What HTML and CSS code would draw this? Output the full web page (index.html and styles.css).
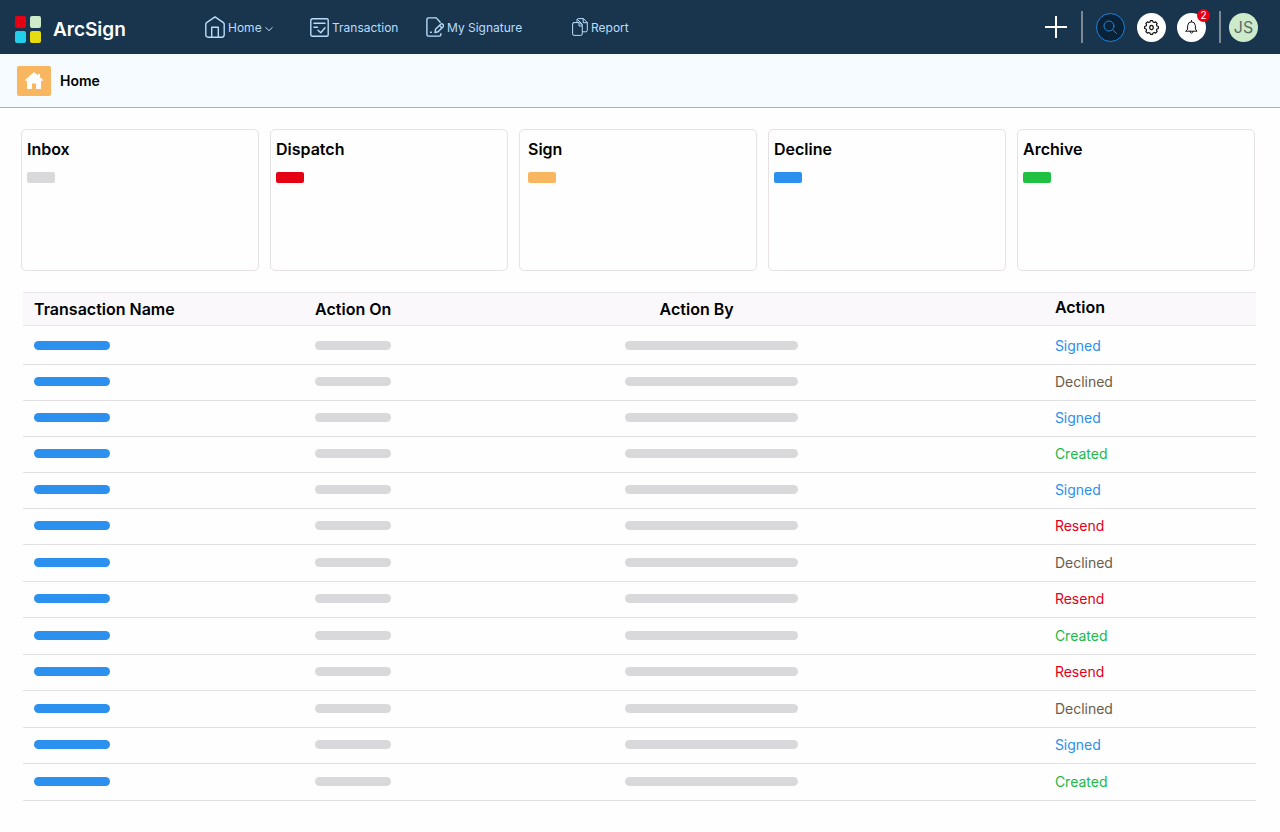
FILE: index.html
```html
<!DOCTYPE html>
<html lang="en">
<head>
<meta charset="utf-8">
<meta name="viewport" content="width=device-width, initial-scale=1">
<title>ArcSign</title>
<link rel="stylesheet" href="styles.css">
</head>
<body>
<header class="topbar">
  <a class="brand" href="#">
    <span class="logo"><i class="red"></i><i class="mint"></i><i class="cyan"></i><i class="yellow"></i></span>
    <span>ArcSign</span>
  </a>
  <nav class="nav">
    <a class="nav-home" href="#">
      <svg width="20" height="22" viewBox="0 0 20 22"><path d="M.8 8.2Q.8 7.2 1.6 6.6L10 .9l8.4 5.7q.8.6.8 1.6v10.6q0 2.4-2.4 2.4H3.200q-2.400 0-2.400-2.400zM6.700 21v-9.700h6.600V21"/></svg>
      <span>Home</span>
      <svg class="chevron" width="8" height="6" viewBox="0 0 8 6"><path d="M.7 1.500L4 4.700l3.300-3.200"/></svg>
    </a>
    <a class="nav-transaction" href="#">
      <svg width="19" height="19" viewBox="0 0 19 19"><rect x=".8" y=".8" width="17.400" height="17.400" rx="1.500"/><path d="M4 5.200h11M4 9.200h3.500M8 12.200l2.800 2.600L15 9.700"/></svg>
      <span>Transaction</span>
    </a>
    <a class="nav-signature" href="#">
      <svg width="18" height="20" viewBox="0 0 18 20"><path d="M14.200 5.200L10.300.9H2.500Q.9.900.9 2.500v15q0 1.600 1.600 1.600h10.800q1.600 0 1.600-1.600v-.8M4.600 15.200h.8M9 15.500l.5-3.200 5.200-5q1.300-1 2.300.2 1 1.200 0 2.400l-5 4.800zM13.500 8.500l2.500 2.500"/></svg>
      <span>My Signature</span>
    </a>
    <a class="nav-report" href="#">
      <svg class="thin" width="16" height="18" viewBox="0 0 16 18"><path d="M1.800 4.600h5.500l3 3v8.300q0 1.500-1.500 1.500H2.100q-1.500 0-1.500-1.500V6q0-1.400 1.200-1.400zM7 4.800V8h3.200M5 4.400V2Q5 .6 6.400.6h5l3.900 3.900v7.900q0 1.400-1.400 1.400h-3.500M11.200.8v3.900h3.900M5.500 1.500l5 5"/></svg>
      <span>Report</span>
    </a>
  </nav>
  <div class="tools">
    <button class="add" aria-label="Add"><svg width="22" height="22" viewBox="0 0 22 22"><path d="M11 0v22M0 11h22"/></svg></button>
    <span class="divider"></span>
    <button class="round search" aria-label="Search"><svg width="15" height="15" viewBox="0 0 15 15"><circle cx="6" cy="6" r="5"/><path d="M9.600 9.600l4 4"/></svg></button>
    <button class="round settings" aria-label="Settings"><svg width="15" height="15" viewBox="0 0 24 24"><path d="M9.500 3.300L10.300 1h3.400l.8 2.300 1.900.8 2.200-1.100 2.400 2.400-1.100 2.200.8 1.900 2.300.8v3.400l-2.300.8-.8 1.900 1.100 2.200-2.400 2.400-2.200-1.100-1.900.8-.8 2.300h-3.400l-.8-2.300-1.900-.8L5.400 21 3 18.600l1.100-2.200-.8-1.900L1 13.700v-3.400l2.300-.8.8-1.900L3 5.400 5.400 3l2.200 1.100z"/><ellipse cx="12" cy="12" rx="2.800" ry="3.400"/></svg></button>
    <button class="round bell" aria-label="Notifications"><svg width="13" height="15" viewBox="0 0 13 15"><path d="M6.500.5v1.300M1 11.200h11L10.400 9V5.800Q10.100 2 6.500 1.800 2.900 2 2.600 5.800V9zM5 11.400q.2 1.700 1.500 1.700T8 11.400"/></svg><span class="badge">2</span></button>
    <span class="divider"></span>
    <button class="round avatar">JS</button>
  </div>
</header>
<div class="crumb">
  <span class="crumb-icon"><svg width="18" height="17" viewBox="0 0 18 17"><path d="M9 0L0 8l1 1.300 1-.8V17h5v-5.500h4V17h5V8.500l1 .8L18 8l-3-2.700V2h-2v1.500z"/></svg></span>
  <h1>Home</h1>
</div>
<main>
  <section class="cards">
    <article class="card"><h2>Inbox</h2><span class="chip grey"></span></article>
    <article class="card"><h2>Dispatch</h2><span class="chip red"></span></article>
    <article class="card roomy"><h2>Sign</h2><span class="chip orange"></span></article>
    <article class="card"><h2>Decline</h2><span class="chip blue"></span></article>
    <article class="card"><h2>Archive</h2><span class="chip green"></span></article>
  </section>
  <table>
    <thead><tr><th class="c-name">Transaction Name</th><th class="c-on">Action On</th><th class="c-by">Action By</th><th class="c-action">Action</th></tr></thead>
    <tbody>
      <tr><td><span class="bar blue"></span></td><td><span class="bar"></span></td><td><span class="bar long"></span></td><td class="signed">Signed</td></tr>
      <tr><td><span class="bar blue"></span></td><td><span class="bar"></span></td><td><span class="bar long"></span></td><td class="declined">Declined</td></tr>
      <tr><td><span class="bar blue"></span></td><td><span class="bar"></span></td><td><span class="bar long"></span></td><td class="signed">Signed</td></tr>
      <tr><td><span class="bar blue"></span></td><td><span class="bar"></span></td><td><span class="bar long"></span></td><td class="created">Created</td></tr>
      <tr><td><span class="bar blue"></span></td><td><span class="bar"></span></td><td><span class="bar long"></span></td><td class="signed">Signed</td></tr>
      <tr><td><span class="bar blue"></span></td><td><span class="bar"></span></td><td><span class="bar long"></span></td><td class="resend">Resend</td></tr>
      <tr class="tall"><td><span class="bar blue"></span></td><td><span class="bar"></span></td><td><span class="bar long"></span></td><td class="declined">Declined</td></tr>
      <tr><td><span class="bar blue"></span></td><td><span class="bar"></span></td><td><span class="bar long"></span></td><td class="resend">Resend</td></tr>
      <tr class="tall"><td><span class="bar blue"></span></td><td><span class="bar"></span></td><td><span class="bar long"></span></td><td class="created">Created</td></tr>
      <tr><td><span class="bar blue"></span></td><td><span class="bar"></span></td><td><span class="bar long"></span></td><td class="resend">Resend</td></tr>
      <tr class="tall"><td><span class="bar blue"></span></td><td><span class="bar"></span></td><td><span class="bar long"></span></td><td class="declined">Declined</td></tr>
      <tr><td><span class="bar blue"></span></td><td><span class="bar"></span></td><td><span class="bar long"></span></td><td class="signed">Signed</td></tr>
      <tr class="tall"><td><span class="bar blue"></span></td><td><span class="bar"></span></td><td><span class="bar long"></span></td><td class="created">Created</td></tr>
    </tbody>
  </table>
</main>
</body>
</html>
```
FILE: styles.css
```css
* { box-sizing: border-box; }
body { margin: 0; background: #fefefe; color: #000; font-family: Inter, "Liberation Sans", sans-serif; }
a { color: inherit; text-decoration: none; }
button { border: 0; padding: 0; font: inherit; cursor: pointer; }
h1, h2 { margin: 0; font-weight: 600; }
svg { display: block; flex: none; fill: none; stroke: currentColor; stroke-linecap: round; stroke-linejoin: round; }

.red { background: #e60013; }
.blue { background: #2b90ee; }
.green { background: #20c043; }
.orange { background: #f8b661; }
.grey { background: #d9d8da; }
.mint { background: #cdeacb; }
.cyan { background: #21d0ea; }
.yellow { background: #e5dc13; }

.topbar { display: flex; align-items: center; height: 54px; padding: 0 22px 0 15px; background: #18354d; }
.brand { display: flex; align-items: center; gap: 12px; width: 190px; color: #fff; font-size: 19px; font-weight: 600; padding-top: 4px; }
.logo { display: grid; grid-template-columns: 11px 11px; grid-auto-rows: 12px; gap: 3px 4px; }
.logo i { border-radius: 2px; }

.nav { display: flex; align-items: center; color: #b9dcfb; font-size: 12px; line-height: 20px; white-space: nowrap; }
.nav a { display: flex; align-items: center; gap: 3px; }
.nav span { padding-top: 1px; }
.nav svg { stroke-width: 1.4; }
.nav .thin { stroke-width: 1; }
.nav .chevron { stroke-width: 1; margin-top: 4px; }
.nav-home { width: 105px; }
.nav-transaction { width: 116px; }
.nav-signature { width: 146px; }

.tools { display: flex; align-items: center; margin-left: auto; }
.add { background: none; color: #fff; margin-right: 14px; }
.add svg { stroke-width: 2; stroke-linecap: butt; }
.divider { width: 2px; height: 32px; background: #7c8994; }
.round { position: relative; display: grid; place-items: center; width: 29px; height: 29px; border-radius: 50%; background: #fff; color: #111; }
.search { margin-left: 13px; border: 1px solid #2382d8; background: #0a2238; color: #2382d8; }
.settings { margin-left: 12px; }
.settings svg { stroke-width: 1.900; }
.bell { margin: 0 13px 0 11px; }
.badge { position: absolute; top: -4px; right: -4px; width: 13px; height: 13px; border-radius: 50%; background: #e60013; color: #fff; font-size: 10px; line-height: 13px; text-align: center; }
.avatar { margin-left: 8px; background: #cdeacb; color: #5d6b68; font-size: 16px; }

.crumb { display: flex; align-items: center; gap: 9px; height: 54px; padding: 0 17px; background: #f5fbff; border-bottom: 1px solid #aeb0b5; }
.crumb-icon { display: grid; place-items: center; width: 34px; height: 30px; border-radius: 2px; background: #f8b661; }
.crumb-icon svg { fill: #fff; stroke: none; }
.crumb h1 { font-size: 14px; line-height: 20px; }

main { padding: 21px 25px 31px 21px; }
.cards { display: grid; grid-template-columns: repeat(5, 1fr); gap: 11px; }
.card { min-height: 142px; padding: 9px 5px; border: 1px solid #e5e1e4; border-radius: 5px; }
.card.roomy { padding-left: 8px; }
.card h2 { font-size: 16px; line-height: 20px; }
.chip { display: block; width: 28px; height: 11px; margin-top: 13px; border-radius: 2px; }

table { width: calc(100% - 1px); margin: 21px 0 0 2px; table-layout: fixed; border-collapse: separate; border-spacing: 0; }
th { height: 34px; padding: 0 11px; background: #faf8fb; border: solid #e8e6ea; border-width: 1px 0; font-size: 16px; font-weight: 600; line-height: 20px; text-align: left; }
.c-name { width: 22.8%; }
.c-on { width: 25.1%; }
.c-by { width: 34.9%; padding-left: 46px; }
.c-action { padding-bottom: 4px; }
td { height: 36px; padding: 0 11px 8px; border-bottom: 1px solid #e1e1e3; font-size: 14px; line-height: 20px; vertical-align: bottom; }
tbody tr:first-child td { height: 39px; }
.tall td { height: 37px; }
td:not(:last-child) { padding-bottom: 14px; }
.bar { display: block; width: 76px; height: 9px; border-radius: 5px; background: #d9d8da; }
.bar.blue { background: #2b90ee; }
.bar.long { width: 173px; }
.signed { color: #2b90ee; }
.declined { color: #6b5c48; }
.created { color: #20b948; }
.resend { color: #e00020; }
```
